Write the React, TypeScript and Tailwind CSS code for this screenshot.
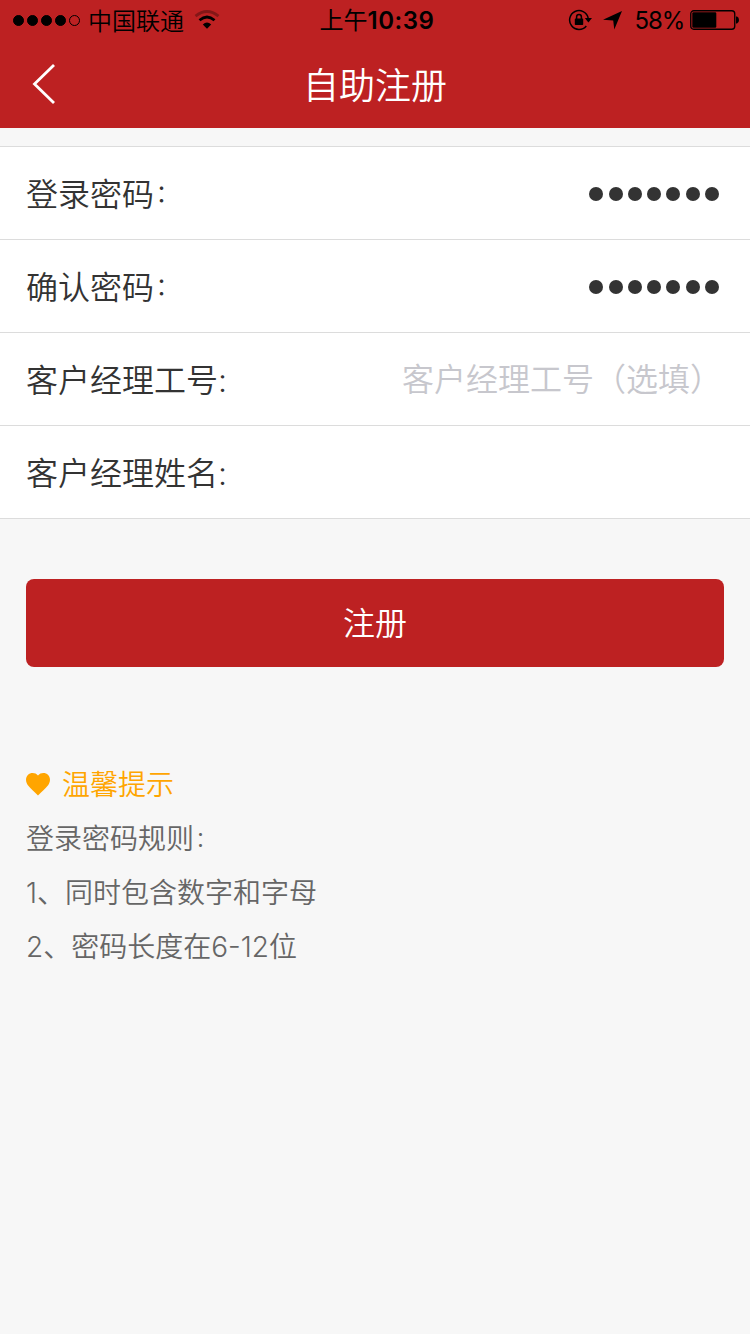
import React from 'react';

interface FormRowProps {
  label: React.ReactNode;
  children?: React.ReactNode;
}

const SIGNAL = [true, true, true, true, false];

// Full-width colon, set smaller and raised to sit mid-height
const Colon = () => <span className="relative top-[-0.16em] ml-[0.06em] text-[0.75em] leading-none">：</span>;

const StatusBar = () => (
  <div className="h-10 grid grid-cols-[1fr_auto_1fr] items-center text-black text-[24px] leading-9 whitespace-nowrap">
    <div className="flex items-center pl-[13px]">
      <div className="flex gap-[3px]">
        {SIGNAL.map((on, i) => (
          <span
            key={i}
            className={`w-[11px] h-[11px] rounded-full border border-black ${on ? 'bg-black' : ''}`}
          />
        ))}
      </div>
      <span className="ml-[8px] pt-[3px] font-[350]">中国联通</span>
      <svg className="ml-[10px] w-[26px] h-5" viewBox="0 0 26 20" fill="none" stroke="black">
        <path d="M1.5 6.2 Q13 -3.2 24.5 6.2" strokeWidth="2.8" opacity="0.3" />
        <path d="M5.5 10.2 Q13 3.8 20.5 10.2" strokeWidth="2.8" />
        <path d="M8.8 14.4 Q13 10.6 17.2 14.4 L13 18.7 Z" fill="black" stroke="none" />
      </svg>
    </div>
    <div className="flex pl-[4px] pt-[2px] font-semibold">
      <span className="font-normal">上午</span>
      <span className="tracking-[0.5px]">10:39</span>
    </div>
    <div className="flex items-center justify-end pr-[11px]">
      <svg className="w-6 h-[22px]" viewBox="0 0 24 22" fill="none" stroke="black" strokeWidth="1.5">
        <path d="M18.3 17 A9.4 9.4 0 1 1 20.2 9" />
        <path d="M16.8 9 H24 L20.4 13.6 Z" fill="black" stroke="none" />
        <rect x="6.8" y="9.6" width="8.4" height="6.4" rx="0.8" fill="black" stroke="none" />
        <path d="M8.6 10.5 V8 A2.4 2.4 0 0 1 13.4 8 V10.5" />
      </svg>
      <svg className="ml-[11px] w-[19px] h-[19px]" viewBox="0 0 19 19">
        <path d="M19 0 L11.3 18.5 L10.2 9.4 L0 8.8 Z" fill="black" />
      </svg>
      <span className="ml-[13px] pt-[2px] tracking-[-1.2px]">58%</span>
      <svg className="ml-[6px] w-[49px] h-5" viewBox="0 0 49 20" fill="none">
        <rect x="0.75" y="0.75" width="44" height="18.5" rx="3" stroke="black" strokeWidth="1.3" />
        <rect x="2.3" y="2.3" width="24" height="15.4" rx="1.2" fill="black" />
        <path d="M46 6.5 H47 Q49 7 49 10 Q49 13 47 13.5 H46 Z" fill="black" />
      </svg>
    </div>
  </div>
);

const FormRow: React.FC<FormRowProps> = ({ label, children }) => (
  <div className="h-[93px] border-b border-[#dcdcdc] flex items-center justify-between pt-[2px] pl-[26px] pr-[31px] text-[32px] leading-[48px] text-[#333333]">
    <label className="pt-[2px]">{label}</label>
    {children}
  </div>
);

const PasswordDots = () => (
  <div className="flex gap-[5.3px]">
    {Array.from({ length: 7 }).map((_, i) => (
      <span key={i} className="w-[14px] h-[14px] rounded-full bg-[#333333]" />
    ))}
  </div>
);

export default function App() {
  return (
    <div
      lang="zh-CN"
      className="w-[750px] h-[1334px] overflow-hidden bg-[#f7f7f7] font-[Inter,'Noto_Sans_CJK_SC',sans-serif]"
    >
      <header className="h-32 bg-[#bd2122]">
        <StatusBar />
        <div className="h-[88px] grid grid-cols-[1fr_auto_1fr] items-center text-white">
          <button aria-label="返回" className="ml-[32px] w-6 h-10">
            <svg className="w-6 h-10" viewBox="0 0 24 40" fill="none" stroke="white" strokeWidth="2.8">
              <path d="M22 1 L2.5 20 L22 39" />
            </svg>
          </button>
          <h1 className="pt-[4px] text-[36px] leading-[54px] font-[350]">自助注册</h1>
        </div>
      </header>

      <form className="mt-[18px] bg-white border-t border-[#dcdcdc] font-[350]">
        <FormRow label={<>登录密码<Colon /></>}>
          <PasswordDots />
        </FormRow>
        <FormRow label={<>确认密码<Colon /></>}>
          <PasswordDots />
        </FormRow>
        <FormRow label="客户经理工号:">
          <span className="-mr-[3px] text-[#c7c7cd]">客户经理工号（选填）</span>
        </FormRow>
        <FormRow label="客户经理姓名:" />
      </form>

      <div className="px-[26px] pt-[60px]">
        <button className="w-full h-[88px] pt-[2px] rounded-lg bg-[#bd2122] text-white text-[32px] font-[350]">注册</button>
      </div>

      <section className="mt-[91px] px-[26px] text-[28px] leading-[54px] font-[350] text-[#666666]">
        <div className="flex items-center text-[#ffa500]">
          <svg className="w-6 h-[23px] mr-3 mb-[1px]" viewBox="0 0 24 23" fill="currentColor">
            <path d="M12 2.6 C9.5 -0.6 4.5 -0.6 1.9 2 C-0.9 5 -0.3 9.4 1.9 12.3 C4.6 15.8 8.3 19 12 22.5 C15.7 19 19.4 15.8 22.1 12.3 C24.3 9.4 24.9 5 22.1 2 C19.5 -0.6 14.5 -0.6 12 2.6 Z" />
          </svg>
          <span>温馨提示</span>
        </div>
        <p>登录密码规则<Colon /></p>
        <p>1、同时包含数字和字母</p>
        <p>2、密码长度在6-12位</p>
      </section>
    </div>
  );
}
